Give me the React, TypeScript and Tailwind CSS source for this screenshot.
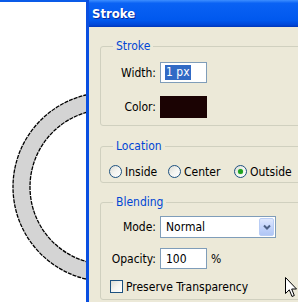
import React from "react";

const font = "font-['DejaVu_Sans','Liberation_Sans',sans-serif] [font-stretch:semi-condensed]";

function Radio({ checked }: { checked?: boolean }) {
  return (
    <div className="w-[13px] h-[13px] shrink-0 rounded-full border border-[#1C5180] bg-[linear-gradient(135deg,#dcdcd4_0%,#f4f4f0_50%,#ffffff_100%)] flex items-center justify-center">
      {checked && <div className="w-[5px] h-[5px] rounded-full bg-[#21A121] shadow-[0_0_1px_#5ed25e]" />}
    </div>
  );
}

function Legend({ children }: { children: React.ReactNode }) {
  return <legend className="ml-[12px] px-[3px] leading-[14px] text-[#0046D5]">{children}</legend>;
}

export default function App() {
  return (
    <div className={`w-[298px] h-[302px] overflow-hidden flex relative bg-white text-[12px] text-black ${font}`}>
      {/* canvas with the ring */}
      <div className="w-[86px] h-full shrink-0 flex flex-col">
        <div className="h-[2px] bg-[#0a5be8]" />
        <div className="flex-1 bg-white">
          <svg width="86" height="300" viewBox="0 0 86 300">
            <path
              d="M13 185 A94.5 94.5 0 1 0 202 185 A94.5 94.5 0 1 0 13 185 Z M30 185 A77.5 77.5 0 1 0 185 185 A77.5 77.5 0 1 0 30 185 Z"
              fill="#d4d4d4"
              fillRule="evenodd"
            />
            <circle cx="107.5" cy="185" r="94.5" fill="none" stroke="#000" strokeWidth="1.3" strokeDasharray="4 1" />
            <circle cx="107.5" cy="185" r="77.5" fill="none" stroke="#000" strokeWidth="1.3" strokeDasharray="4 1" />
          </svg>
        </div>
      </div>

      {/* dialog window */}
      <div className="w-[240px] h-full shrink-0 flex flex-col border-l-[3px] border-[#0a4fe0] bg-[#ECE9D8]">
        <div className="h-[27px] shrink-0 flex items-center pl-[3px] pt-[1px] bg-[linear-gradient(180deg,#3d8eff_0%,#0a62f4_12%,#0058ee_75%,#0047d8_92%,#0035b8_100%)]">
          <span className="text-white font-bold text-[13px] [text-shadow:1px_1px_0_#0a2a9a]">Stroke</span>
        </div>

        <div className="flex flex-col px-[11px]">
          {/* Stroke */}
          <fieldset className="mt-[12px] border border-[#D0D0BF] rounded-[3px] pb-[7px]">
            <Legend>Stroke</Legend>
            <div className="mt-[9px] flex items-center h-[21px]">
              <span className="w-[55px] text-right">Width:</span>
              <div className="ml-[4px] w-[47px] h-[21px] border border-[#7F9DB9] bg-white flex items-center pl-[4px]">
                <span className="bg-[#316AC5] text-white leading-[15px] px-[1px]">1 px</span>
              </div>
            </div>
            <div className="mt-[13px] flex items-center h-[22px]">
              <span className="w-[55px] text-right">Color:</span>
              <div className="ml-[4px] w-[47px] h-[22px] bg-[#1B0303]" />
            </div>
          </fieldset>

          {/* Location */}
          <fieldset className="mt-[13px] border border-[#D0D0BF] rounded-[3px] pb-[3px]">
            <Legend>Location</Legend>
            <div className="mt-[11px] flex items-center h-[15px] pl-[8px]">
              <div className="w-[59px] flex items-center gap-[3px]">
                <Radio />
                <span>Inside</span>
              </div>
              <div className="w-[66px] flex items-center gap-[3px]">
                <Radio />
                <span>Center</span>
              </div>
              <div className="flex items-center gap-[3px]">
                <Radio checked />
                <span>Outside</span>
              </div>
            </div>
          </fieldset>

          {/* Blending */}
          <fieldset className="mt-[12px] border border-[#D0D0BF] rounded-[3px] pb-[5px]">
            <Legend>Blending</Legend>
            <div className="mt-[7px] flex items-center h-[22px]">
              <span className="w-[55px] text-right">Mode:</span>
              <div className="ml-[4px] w-[116px] h-[22px] border border-[#7F9DB9] bg-white flex items-center pl-[5px] pr-[1px]">
                <span className="flex-1">Normal</span>
                <div className="w-[15px] h-[18px] rounded-[2px] border border-[#B9CDF5] bg-[linear-gradient(180deg,#dfe8fd_0%,#c5d5fb_50%,#b0c6f5_100%)] flex items-center justify-center">
                  <svg width="8" height="6" viewBox="0 0 8 6">
                    <path d="M1 1.5 L4 4.5 L7 1.5" fill="none" stroke="#4D6185" strokeWidth="2" />
                  </svg>
                </div>
              </div>
            </div>
            <div className="mt-[10px] flex items-center h-[21px]">
              <span className="w-[55px] text-right">Opacity:</span>
              <div className="ml-[4px] w-[47px] h-[21px] border border-[#7F9DB9] bg-white flex items-center pl-[5px]">
                <span>100</span>
              </div>
              <span className="ml-[4px]">%</span>
            </div>
            <div className="mt-[10px] flex items-center h-[15px] pl-[9px]">
              <div className="w-[13px] h-[13px] shrink-0 border border-[#1C5180] bg-[linear-gradient(135deg,#dcdcd4_0%,#f4f4f0_50%,#ffffff_100%)]" />
              <span className="ml-[3px]">Preserve Transparency</span>
            </div>
          </fieldset>
        </div>
      </div>

      {/* mouse pointer */}
      <svg className="absolute left-[285px] top-[277px]" width="13" height="21" viewBox="0 0 13 21">
        <path d="M0.5 0.5 L0.5 16.5 L4.3 12.8 L7 19.5 L9.3 18.5 L6.7 12 L11.5 12 Z" fill="#fff" stroke="#000" strokeWidth="1" strokeLinejoin="round" />
      </svg>
    </div>
  );
}
